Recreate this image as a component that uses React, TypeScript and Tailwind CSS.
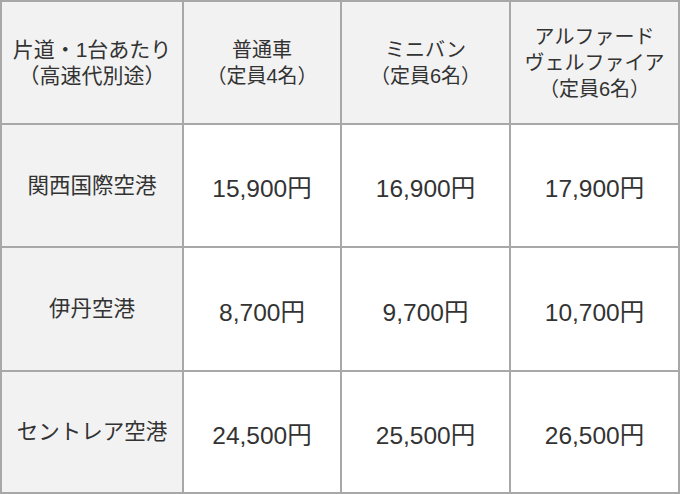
import React from "react";

const jp = { fontFamily: '"Liberation Sans", "Noto Sans CJK JP", sans-serif' };

const header = [
  ["片道・1台あたり", "（高速代別途）"],
  ["普通車", "（定員4名）"],
  ["ミニバン", "（定員6名）"],
  ["アルファード", "ヴェルファイア", "（定員6名）"],
];

const rows = [
  ["関西国際空港", "15,900円", "16,900円", "17,900円"],
  ["伊丹空港", "8,700円", "9,700円", "10,700円"],
  ["セントレア空港", "24,500円", "25,500円", "26,500円"],
];

export default function App() {
  return (
    <div className="w-[680px] h-[494px] bg-white" style={jp}>
      <div className="grid grid-cols-[182px_158px_169px_169px] grid-rows-[123px_123px_124px_122px] border-t-2 border-l-2 border-[#a8a8a8] text-[#333]">
        {header.map((lines, i) => (
          <div
            key={i}
            className={
              i === 0
                ? "flex flex-col items-center justify-center border-r-2 border-b-2 border-[#a8a8a8] bg-[#f2f2f2] text-[21px] leading-[26px] text-center"
                : "flex flex-col items-center justify-center border-r-2 border-b-2 border-[#a8a8a8] bg-[#f2f2f2] text-[20px] leading-[26px] text-center"
            }
          >
            {lines.map((l, j) => (
              <span key={j}>{l}</span>
            ))}
          </div>
        ))}
        {rows.map((r, i) => (
          <React.Fragment key={i}>
            <div className="flex items-center justify-center border-r-2 border-b-2 border-[#a8a8a8] bg-[#f2f2f2] text-[21.5px] leading-[26px]">
              {r[0]}
            </div>
            {r.slice(1).map((v, j) => (
              <div
                key={j}
                className="flex items-center justify-center border-r-2 border-b-2 border-[#a8a8a8] bg-white text-[24.5px] pt-[8px]"
              >
                {v}
              </div>
            ))}
          </React.Fragment>
        ))}
      </div>
    </div>
  );
}
